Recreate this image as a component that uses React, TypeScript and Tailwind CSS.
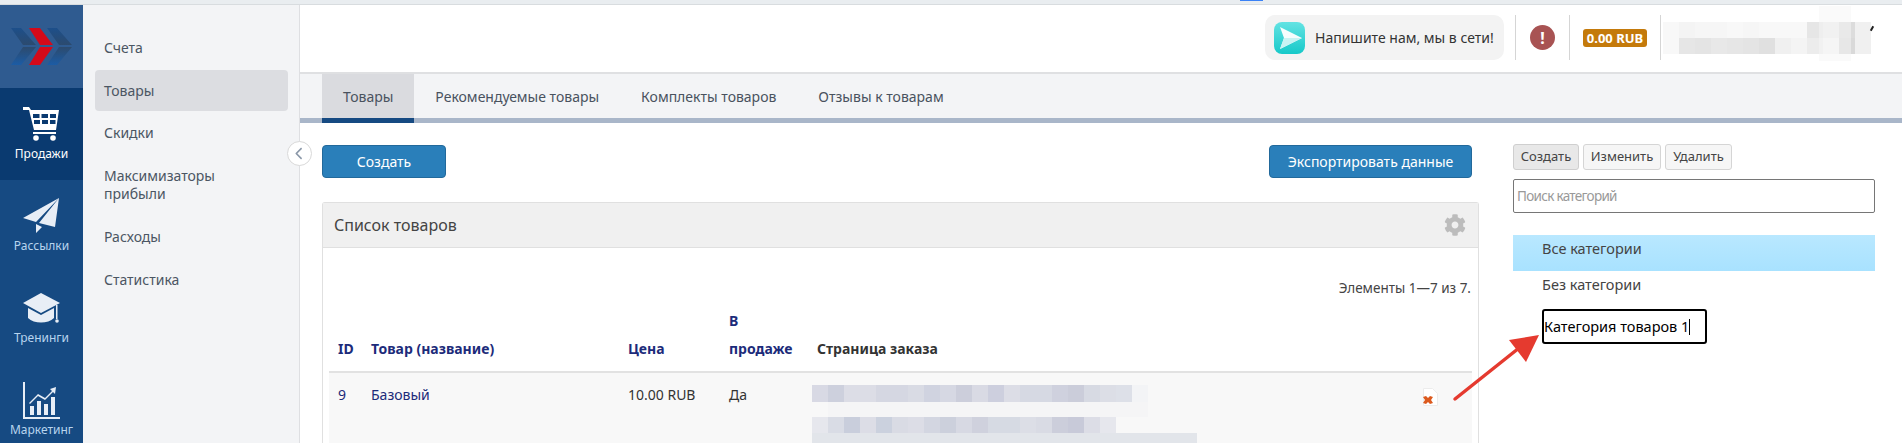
import { FaCog } from "react-icons/fa";
import { FaChevronLeft } from "react-icons/fa6";

const font = "font-['Noto_Sans',sans-serif]";

const Logo = () => (
  <svg width="61" height="37" viewBox="0 0 61 37">
    <defs>
      <linearGradient id="lg" x1="0" y1="0" x2="0" y2="1">
        <stop offset="0" stopColor="#1d4f8a" />
        <stop offset="0.5" stopColor="#2d4a6c" />
        <stop offset="1" stopColor="#1c5ca5" />
      </linearGradient>
    </defs>
    <path d="M0 0h10l15 17H12zM0 37h10l15-18H12z" fill="url(#lg)" />
    <path d="M18 0h11l13 17H29zM18 37h11l13-18H29z" fill="#d40a1a" />
    <path d="M36 0h10l15 17H48zM36 37h10l15-18H48z" fill="url(#lg)" />
  </svg>
);

const Cart = () => (
  <svg width="37" height="34" viewBox="0 0 37 34" fill="#fff">
    <path d="M0 0h6l2 3h28l-3 20H11L6 3H0z" />
    <g fill="#0a3a70">
      <rect x="10" y="7" width="6.5" height="4" />
      <rect x="18.5" y="7" width="6.5" height="4" />
      <rect x="27" y="7" width="6" height="4" />
      <rect x="11" y="13" width="6" height="4" />
      <rect x="19" y="13" width="6" height="4" />
      <rect x="27" y="13" width="5.5" height="4" />
    </g>
    <rect x="10" y="25" width="23" height="2" />
    <circle cx="13" cy="31" r="2.8" />
    <circle cx="30" cy="31" r="2.8" />
  </svg>
);

const Plane = () => (
  <svg width="37" height="36" viewBox="0 0 37 36" fill="#e8eef6">
    <path d="M36 0L0 20l13 4zM36 0L16 25l16 4zM13 26v9l6-6z" />
  </svg>
);

const Cap = () => (
  <svg width="37" height="31" viewBox="0 0 37 31" fill="#e8eef6">
    <path d="M18 0l19 10-19 10L0 10z" />
    <path d="M5 15l13 7 13-7v10c-6 6-20 6-26 0z" />
    <rect x="33" y="12" width="1.5" height="14" />
    <circle cx="34" cy="28" r="1.8" />
  </svg>
);

const Chart = () => (
  <svg width="37" height="37" viewBox="0 0 37 37" fill="#e8eef6">
    <path d="M0 0h2v35h35v2H0z" />
    <rect x="7" y="24" width="4" height="9" />
    <rect x="14" y="19" width="4" height="14" />
    <rect x="21" y="22" width="4" height="11" />
    <rect x="28" y="15" width="4" height="18" />
    <path d="M6 21l9-9 7 4 7-7-2-2 6-2-1 7-2-2-8 8-7-4-8 8z" />
  </svg>
);

const Tile = ({ c, w = 16 }: { c: string; w?: number }) => (
  <div className="h-full shrink-0" style={{ width: w, background: c }} />
);

const rail = [
  { label: "Продажи", icon: <Cart />, active: true },
  { label: "Рассылки", icon: <Plane /> },
  { label: "Тренинги", icon: <Cap /> },
  { label: "Маркетинг", icon: <Chart /> },
];

const menu = ["Счета", "Товары", "Скидки", "Максимизаторы прибыли", "Расходы", "Статистика"];
const tabs = ["Товары", "Рекомендуемые товары", "Комплекты товаров", "Отзывы к товарам"];

const blur1 = ["#d8d9e4", "#cdd0dd", "#dcdde6", "#dcdde6", "#d5d7e2", "#d5d7e2", "#d9dbe4", "#d0d3e0", "#d6d8e3", "#cccedb", "#d9dae4", "#cdcfde", "#dcdde6", "#d6d9e3", "#d6d9e3", "#cfd1de", "#cbcdda", "#d7dae3", "#dcdee6", "#dde0e8", "#f3f4f6"];
const blur2 = ["#e6e7ed", "#d9dce5", "#c9cedc", "#dcdde6", "#cbd1de", "#d9dbe4", "#dcdde6", "#d3d6e1", "#ccd0dc", "#d7d9e3", "#cfd1dd", "#d6dae3", "#d6dae3", "#dcdee6", "#d9dbe4", "#cccedb", "#c8cad9", "#dcdde6", "#e6e7ed"];
const userTop = ["#f8f8f8", "#f4f4f4", "#f6f6f6", "#f6f6f6", "#f8f8f8", "#f6f6f6", "#f8f8f8", "#f8f8f8", "#f8f8f8", "#e6e6e6", "#ececec", "#dcdcdc", "#f0f0f0"];
const userBottom = ["#f8f8f8", "#e6e6e6", "#e4e4e4", "#e8e8e8", "#e6e6e6", "#e4e4e4", "#e0e0e0", "#f0f0f0", "#f4f4f4", "#ececec", "#f4f4f4", "#d9d9d9", "#f0f0f0"];

export default function App() {
  return (
    <div className={`${font} relative flex h-[443px] w-[1902px] flex-col overflow-hidden bg-white text-[14px] text-[#333]`}>
      <div className="relative h-[5px] shrink-0 border-b border-[#d8dcdf] bg-[#e9edf0]">
        <div className="absolute left-[1240px] top-0 h-px w-[23px] bg-[#3b82f6]" />
      </div>
      <div className="flex min-h-0 flex-1">
        {/* left rail */}
        <div className="flex w-[83px] shrink-0 flex-col bg-[#164a82]">
          <div className="flex h-[83px] shrink-0 items-center justify-center bg-[#2f5b90]">
            <Logo />
          </div>
          {rail.map((r) => (
            <div
              key={r.label}
              className={`flex h-[92px] shrink-0 flex-col items-center pt-[18px] text-[12px] ${r.active ? "bg-[#0a3a70] text-white" : "text-[#b8d4ee]"}`}
            >
              <div className="flex h-[36px] items-center">{r.icon}</div>
              <div className="mt-[4px] leading-[16px]">{r.label}</div>
            </div>
          ))}
        </div>

        {/* second menu */}
        <div className="relative flex w-[217px] shrink-0 flex-col gap-px border-r border-[#dedfe2] bg-[#f3f4f6] px-[12px] pt-[22px] text-[#4b5663]">
          {menu.map((m, i) => (
            <div
              key={m}
              className={`flex w-[193px] items-center rounded-[4px] px-[9px] text-[14px] leading-[18px] ${i === 1 ? "h-[41px] bg-[#dcdde1]" : "py-[12px]"}`}
            >
              {m}
            </div>
          ))}
          <div className="absolute right-[-13px] top-[136px] flex h-[25px] w-[25px] items-center justify-center rounded-full border border-[#d9d9d9] bg-white text-[#8a97a8]">
            <FaChevronLeft size={13} />
          </div>
        </div>

        {/* main */}
        <div className="flex min-w-0 flex-1 flex-col">
          <div className="flex h-[69px] shrink-0 items-center justify-end border-b-2 border-[#dfe0e2] pb-[2px] pr-[32px]">
            <div className="flex h-[45px] w-[239px] items-center rounded-[10px] bg-[#f3f3f3] pl-[9px]">
              <svg width="31" height="32" viewBox="0 0 31 32">
                <defs>
                  <linearGradient id="tg" x1="0" y1="0" x2="0" y2="1">
                    <stop offset="0" stopColor="#63e3e3" />
                    <stop offset="1" stopColor="#17c9c9" />
                  </linearGradient>
                </defs>
                <rect width="31" height="32" rx="8" fill="url(#tg)" />
                <path d="M6 5l22 11L6 27l4-11z" fill="#fff" opacity="0.95" />
                <path d="M10 16h18L6 27z" fill="#c8f3f3" />
              </svg>
              <span className="ml-[10px] text-[14px] text-[#333]">Напишите нам, мы в сети!</span>
            </div>
            <div className="ml-[11px] h-[45px] w-px bg-[#d5d5d5]" />
            <div className="flex w-[53px] justify-center">
              <div className="flex h-[25px] w-[25px] items-center justify-center rounded-full bg-[#a85353] text-[16px] font-bold text-white">!</div>
            </div>
            <div className="h-[45px] w-px bg-[#d5d5d5]" />
            <div className="flex w-[90px] justify-center">
              <div className="rounded-[3px] bg-[#c47a0b] px-[4px] text-[13px] font-bold leading-[18px] text-white">0.00 RUB</div>
            </div>
            <div className="h-[45px] w-px bg-[#d5d5d5]" />
            <div className="relative w-[209px] pl-[2px]">
              <div className="flex h-[16px]">
                {userTop.map((c, i) => (
                  <Tile key={i} c={c} />
                ))}
              </div>
              <div className="flex h-[16px]">
                {userBottom.map((c, i) => (
                  <Tile key={i} c={c} />
                ))}
              </div>
              <div className="absolute left-[158px] top-[-16px] h-[55px] w-[32px] bg-[#f6f6f6] opacity-50" />
              <div className="absolute left-[210px] top-[4px] h-[5px] w-[2px] rotate-[30deg] bg-[#222]" />
            </div>
          </div>

          <div className="flex h-[49px] shrink-0 border-b-[5px] border-[#a9b6c9] bg-[#f3f4f6] pl-[22px] text-[#49525e]">
            {tabs.map((t, i) => (
              <div
                key={t}
                className={`-mb-[5px] flex items-center border-b-[5px] px-[21px] ${i === 0 ? "border-[#164a82] bg-[#dadbdf]" : "border-transparent"}`}
              >
                {t}
              </div>
            ))}
          </div>

          <div className="flex min-h-0 flex-1 pl-[22px] pt-[22px]">
            <div className="flex w-[1157px] shrink-0 flex-col">
              <div className="flex justify-between pr-[7px]">
                <button className="h-[33px] w-[124px] rounded-[4px] border border-[#22699b] bg-[#2a7fba] text-white">Создать</button>
                <button className="h-[33px] w-[203px] rounded-[4px] border border-[#22699b] bg-[#2a7fba] text-white">Экспортировать данные</button>
              </div>
              <div className="mt-[24px] flex-1 rounded-t-[3px] border border-b-0 border-[#e0e0e0] pl-[6px] pr-[6px]">
                <div className="-mx-[6px] flex h-[45px] items-center justify-between border-b border-[#e0e0e0] bg-[#f0f0f0] pl-[11px] pr-[12px]">
                  <span className="text-[16px] text-[#444]">Список товаров</span>
                  <FaCog size={22} className="text-[#bcbcbc]" />
                </div>
                <div className="mt-[31px] pr-px text-right text-[13.5px] leading-[18px] text-[#444]">Элементы 1—7 из 7.</div>
                <div className="mt-[10px] grid grid-cols-[33px_257px_101px_88px_1fr] border-b-2 border-[#e2e2e2] pb-[8px] pl-[9px] text-[14px] font-bold leading-[28px] text-[#1c2b7a]">
                  <div className="self-end">ID</div>
                  <div className="self-end">Товар (название)</div>
                  <div className="self-end">Цена</div>
                  <div className="self-end">В<br />продаже</div>
                  <div className="self-end text-[#333]">Страница заказа</div>
                </div>
                <div className="grid h-[80px] grid-cols-[33px_257px_101px_83px_1fr] bg-[#f8f8f8] pl-[9px] pt-[12px] text-[14px] leading-[20px]">
                  <div className="text-[#1c2b7a]">9</div>
                  <div className="text-[#1c2b7a]">Базовый</div>
                  <div>10.00 RUB</div>
                  <div>Да</div>
                  <div className="relative">
                    <div className="flex h-[17px]">
                      {blur1.map((c, i) => (
                        <Tile key={i} c={c} />
                      ))}
                    </div>
                    <div className="ml-[16px] h-[15px] w-[320px] bg-[#f5f5f6]" />
                    <div className="flex h-[16px]">
                      {blur2.map((c, i) => (
                        <Tile key={i} c={c} />
                      ))}
                    </div>
                    <div className="h-[10px] w-[385px] bg-[#e2e5ea]" />
                    <svg className="absolute right-[34px] top-[3px]" width="15" height="18" viewBox="0 0 15 18">
                      <path d="M0.5 0.5h9l5 5v12h-14z" fill="#fff" stroke="#ececec" />
                      <path d="M0 9l3-1 2 2 2-2 3 1-2 3 2 3-3 1-2-2-2 2-3-1 2-3z" fill="#dc5a1e" />
                    </svg>
                  </div>
                </div>
              </div>
            </div>

            {/* categories */}
            <div className="ml-[34px] w-[362px] shrink-0 text-[14.5px]">
              <div className="-mt-px flex gap-[4px] text-[13px]">
                <button className="h-[26px] w-[66px] rounded-[3px] border border-[#cfcfcf] bg-[#e8e8e8] text-[#444]">Создать</button>
                <button className="h-[26px] w-[78px] rounded-[3px] border border-[#d5d5d5] bg-[#f6f6f6] text-[#444]">Изменить</button>
                <button className="h-[26px] w-[67px] rounded-[3px] border border-[#d5d5d5] bg-[#f6f6f6] text-[#444]">Удалить</button>
              </div>
              <div className="mt-[9px] flex h-[34px] items-center rounded-[2px] border border-[#767676] px-[3px] text-[13.5px] tracking-[-0.7px] text-[#999]">Поиск категорий</div>
              <div className="mt-[22px] h-[36px] bg-gradient-to-b from-[#b9e8ff] to-[#a8e2ff] pl-[29px] pt-[4px] leading-[18px] text-[#444]">Все категории</div>
              <div className="h-[36px] pl-[29px] pt-[4px] leading-[18px] text-[#444]">Без категории</div>
              <div className="ml-[29px] mt-[2px] flex h-[35px] w-[165px] items-center rounded-[3px] border-2 border-black text-black">
                Категория товаров 1<span className="h-[16px] w-px bg-black" />
              </div>
            </div>
          </div>
        </div>
      </div>

      {/* annotation arrow */}
      <svg className="pointer-events-none absolute left-0 top-0" width="1902" height="443">
        <path d="M1455 399L1519 348" stroke="#e53a2f" strokeWidth="3.5" strokeLinecap="round" />
        <path d="M1539 335L1509 340L1526 362z" fill="#e53a2f" />
      </svg>
    </div>
  );
}
